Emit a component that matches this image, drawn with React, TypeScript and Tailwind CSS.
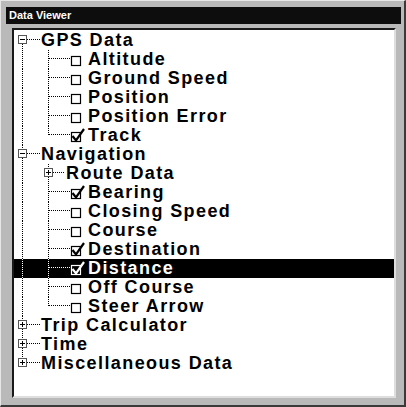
import React from "react";

type Kind = "root" | "branch" | "leaf";
type Row = {
  label: string;
  kind: Kind;
  expanded?: boolean;
  checked?: boolean;
  first?: boolean;
  last0?: boolean;
  last1?: boolean;
  selected?: boolean;
};

const rows: Row[] = [
  { label: "GPS Data", kind: "root", expanded: true, first: true },
  { label: "Altitude", kind: "leaf" },
  { label: "Ground Speed", kind: "leaf" },
  { label: "Position", kind: "leaf" },
  { label: "Position Error", kind: "leaf" },
  { label: "Track", kind: "leaf", checked: true, last1: true },
  { label: "Navigation", kind: "root", expanded: true },
  { label: "Route Data", kind: "branch" },
  { label: "Bearing", kind: "leaf", checked: true },
  { label: "Closing Speed", kind: "leaf" },
  { label: "Course", kind: "leaf" },
  { label: "Destination", kind: "leaf", checked: true },
  { label: "Distance", kind: "leaf", checked: true, selected: true },
  { label: "Off Course", kind: "leaf" },
  { label: "Steer Arrow", kind: "leaf", last1: true },
  { label: "Trip Calculator", kind: "root" },
  { label: "Time", kind: "root" },
  { label: "Miscellaneous Data", kind: "root", last0: true },
];

function Guides({ row }: { row: Row }) {
  const c = row.selected ? "#ffffff" : "#000000";
  const bg = row.selected ? "#000000" : "#ffffff";
  const dot = { stroke: c, strokeWidth: 1, strokeDasharray: "1 1" } as const;
  const solid = { stroke: c, strokeWidth: 1 } as const;
  const w = row.kind === "root" ? 27 : row.kind === "branch" ? 52 : 74;
  return (
    <svg width={w} height={19} viewBox={`0 0 ${w} 19`} className="shrink-0 block">
      {row.kind === "root" ? (
        <>
          {!row.first && <line x1={8.5} y1={0} x2={8.5} y2={4} {...dot} />}
          {!row.last0 && <line x1={8.5} y1={13} x2={8.5} y2={19} {...dot} />}
          <rect x={4.5} y={4.5} width={8} height={8} fill={bg} stroke="#555" strokeWidth={1} />
          <line x1={6} y1={8.5} x2={11} y2={8.5} {...solid} />
          {!row.expanded && <line x1={8.5} y1={6} x2={8.5} y2={11} {...solid} />}
          <line x1={13} y1={8.5} x2={26} y2={8.5} {...dot} />
        </>
      ) : (
        <>
          <line x1={8.5} y1={0} x2={8.5} y2={19} {...dot} />
          {row.kind === "branch" ? (
            <>
              <line x1={34.5} y1={0} x2={34.5} y2={4} {...dot} />
              <line x1={34.5} y1={13} x2={34.5} y2={19} {...dot} />
              <rect x={30.5} y={4.5} width={8} height={8} fill={bg} stroke="#555" strokeWidth={1} />
              <line x1={32} y1={8.5} x2={37} y2={8.5} {...solid} />
              <line x1={34.5} y1={6} x2={34.5} y2={11} {...solid} />
              <line x1={39} y1={8.5} x2={51} y2={8.5} {...dot} />
            </>
          ) : (
            <>
              <line x1={34.5} y1={0} x2={34.5} y2={row.last1 ? 9 : 19} {...dot} />
              <line x1={35} y1={8.5} x2={56} y2={8.5} {...dot} />
              <rect x={57.5} y={6.5} width={9} height={9} fill={bg} stroke={c} strokeWidth={1.2} />
              {row.checked && (
                <path d="M58.5 10 L62 14.5 L70 3" fill="none" stroke={c} strokeWidth={2.2} strokeLinejoin="miter" />
              )}
            </>
          )}
        </>
      )}
    </svg>
  );
}

export default function App() {
  return (
    <div
      className="w-[406px] h-[407px] bg-[#b9b9b9] border-t border-l border-[#e6e6e6] border-r-2 border-b-2 border-r-[#3a3a3a] border-b-[#3a3a3a] pl-[5px] pt-[6px] flex flex-col"
      style={{ fontFamily: '"Liberation Sans", Arial, sans-serif' }}
    >
      <div className="w-[395px] h-[17px] bg-[#0d0d0d] text-white text-[11px] font-bold leading-[17px] pl-[3px]">
        Data Viewer
      </div>
      <div className="mt-[4px] ml-[6px] w-[384px] h-[370px] bg-white border-2 border-t-[#1a1a1a] border-l-[#1a1a1a] border-b-[#dedede] border-r-[#dedede] pt-[1px] flex flex-col">
        {rows.map((r) => (
          <div
            key={r.label}
            className={
              "h-[19px] flex items-center " + (r.selected ? "bg-black text-white" : "text-black")
            }
          >
            <Guides row={r} />
            <span className="text-[18px] font-bold leading-[19px] tracking-[1.4px] whitespace-nowrap">
              {r.label}
            </span>
          </div>
        ))}
      </div>
    </div>
  );
}
